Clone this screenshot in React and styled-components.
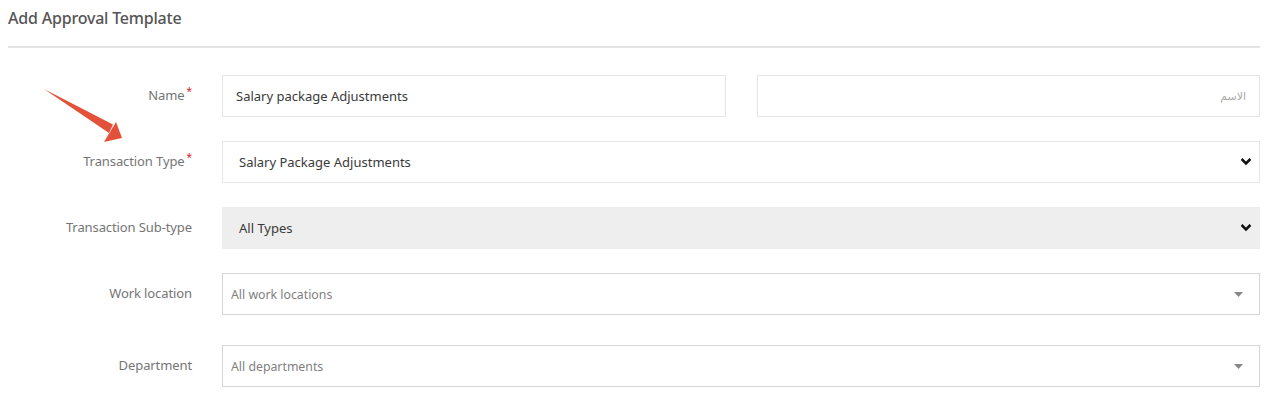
import React from 'react';
import styled, { createGlobalStyle } from 'styled-components';

const Global = createGlobalStyle`
  body {
    margin: 0;
    background: #fff;
    font-family: "Noto Sans", "Open Sans", sans-serif;
  }
`;

const Page = styled.div`
  position: relative;
  padding: 0 13px 0 8px;
`;

const Title = styled.h1`
  margin: 0;
  padding-top: 7px;
  height: 48px;
  box-sizing: border-box;
  font-size: 16px;
  font-weight: 500;
  color: #555;
  letter-spacing: -0.2px;
  border-bottom: 2px solid #e3e3e3;
`;

const Form = styled.div`
  display: flex;
  flex-direction: column;
  padding-top: 27px;
`;

const Row = styled.div`
  display: grid;
  grid-template-columns: 184px 1fr;
  column-gap: 30px;
  align-items: center;
  margin-bottom: ${(p) => p.gap || 24}px;
`;

const Label = styled.label`
  text-align: right;
  font-size: 13px;
  color: #757575;
  letter-spacing: -0.1px;
  margin-top: -3px;
`;

const Star = styled.span`
  color: #e02020;
  font-size: 10px;
  position: relative;
  top: -5px;
  margin-left: 2px;
`;

const Pair = styled.div`
  display: grid;
  grid-template-columns: 1fr 1fr;
  column-gap: 31px;
`;

const Field = styled.div`
  height: 42px;
  box-sizing: border-box;
  display: flex;
  align-items: center;
  justify-content: space-between;
  padding: 0 ${(p) => p.right || 13}px 0 ${(p) => p.indent || 13}px;
  border: 1px solid ${(p) => (p.dark ? '#d6d6d6' : '#e6e6e6')};
  background: ${(p) => (p.filled ? '#eeeeee' : '#fff')};
  border-color: ${(p) => (p.filled ? '#eeeeee' : undefined)};
  font-size: ${(p) => (p.placeholder ? 12.3 : 13)}px;
  color: ${(p) => (p.placeholder ? '#808080' : '#3a3a3a')};
  direction: ${(p) => (p.rtl ? 'rtl' : 'ltr')};
`;

const Arabic = styled.span`
  font-size: 11px;
  color: #aaa;
  font-family: "DejaVu Sans", sans-serif;
`;

const Chevron = () => (
  <svg width="10" height="8" viewBox="0 0 10 8">
    <path d="M1.5 1.8 L5 5.3 L8.5 1.8" fill="none" stroke="#111" strokeWidth="2.6" strokeLinecap="square" />
  </svg>
);

const Caret = () => (
  <svg width="9" height="5" viewBox="0 0 9 5">
    <path d="M0 0 H9 L4.5 5 Z" fill="#888" />
  </svg>
);

const Arrow = styled.svg`
  position: absolute;
  left: 0;
  top: 0;
  pointer-events: none;
`;

export default function App() {
  return (
    <Page>
      <Global />
      <Title>Add Approval Template</Title>
      <Form>
        <Row>
          <Label>
            Name<Star>*</Star>
          </Label>
          <Pair>
            <Field>Salary package Adjustments</Field>
            <Field rtl>
              <Arabic>الاسم</Arabic>
            </Field>
          </Pair>
        </Row>
        <Row>
          <Label>
            Transaction Type<Star>*</Star>
          </Label>
          <Field indent={16} right={8}>
            Salary Package Adjustments
            <Chevron />
          </Field>
        </Row>
        <Row>
          <Label>Transaction Sub-type</Label>
          <Field indent={16} right={8} filled>
            All Types
            <Chevron />
          </Field>
        </Row>
        <Row gap={30}>
          <Label>Work location</Label>
          <Field indent={8} right={16} dark placeholder>
            All work locations
            <Caret />
          </Field>
        </Row>
        <Row>
          <Label>Department</Label>
          <Field indent={8} right={16} dark placeholder>
            All departments
            <Caret />
          </Field>
        </Row>
      </Form>
      <Arrow width="140" height="150">
        <path d="M44 89 L113 124.5 L109 133 Z" fill="#e4513a" />
        <path d="M104 142 L122 138 L116 122 Z" fill="#e4513a" />
      </Arrow>
    </Page>
  );
}
